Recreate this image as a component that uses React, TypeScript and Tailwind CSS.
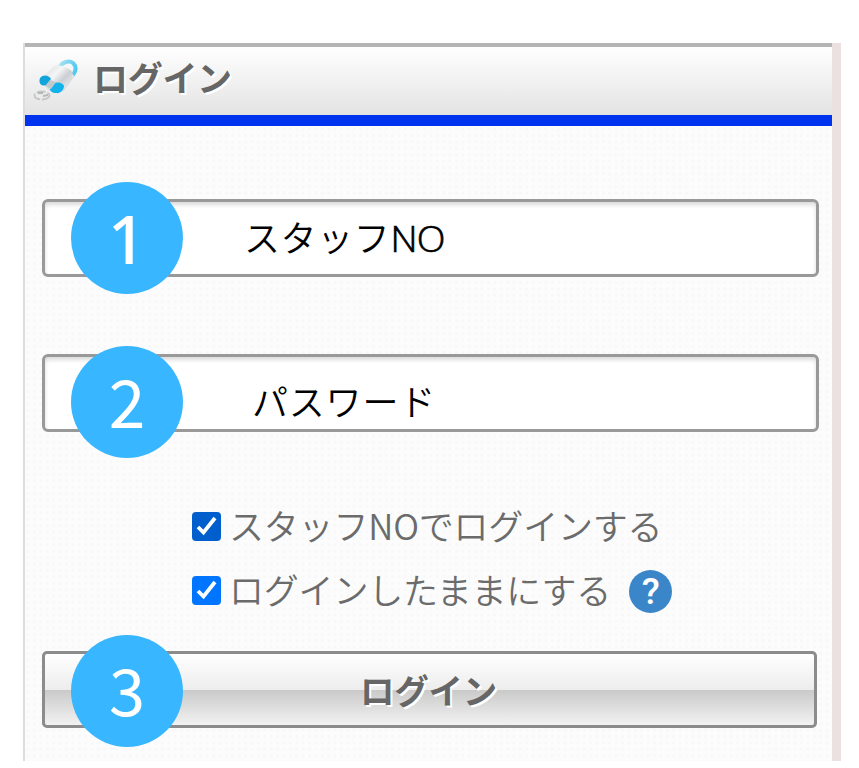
import type { ReactNode } from "react";

const inputBox =
  "flex h-[78px] w-[777px] items-center rounded-[6px] border-[3px] border-[#999] bg-white shadow-[inset_0_3px_4px_rgba(0,0,0,0.14)]";

const Badge = ({ children, className = "" }: { children: ReactNode; className?: string }) => (
  <span
    className={`absolute left-[29px] flex h-28 w-28 items-center justify-center rounded-full bg-[#38b6ff] leading-none text-white ${className}`}
  >
    {children}
  </span>
);

const LockIcon = () => (
  <svg width="46" height="46" viewBox="0 0 46 46" fill="none">
    <defs>
      <linearGradient id="lock" x1="14" y1="12" x2="34" y2="32" gradientUnits="userSpaceOnUse">
        <stop stopColor="#e0e3e6" />
        <stop offset="0.35" stopColor="#f4f5f6" />
        <stop offset="0.65" stopColor="#cbced3" />
        <stop offset="1" stopColor="#e6e8ea" />
      </linearGradient>
      <linearGradient id="shackle" x1="28" y1="6" x2="44" y2="12" gradientUnits="userSpaceOnUse">
        <stop stopColor="#a5e0f2" />
        <stop offset="1" stopColor="#4fc9f2" />
      </linearGradient>
    </defs>
    <ellipse cx="10" cy="37.5" rx="7.5" ry="4" stroke="#c3c5c6" strokeWidth="1.8" strokeDasharray="9 2" />
    <path d="M6 35h5M11 38l5-1" stroke="#b5b8b9" strokeWidth="1.8" />
    <path d="M28 9c2-5 9-7 13-4 4 4 3 8 0 12" stroke="url(#shackle)" strokeWidth="4" />
    <path d="M20 10c4-4 10-3 15 0 5 2 7 5 5 10L29 34c-7 2-18-4-22-11z" fill="url(#lock)" />
    <path d="M8 20c3-4 9-3 11 1l-4 6c-5 2-9-1-7-7z" fill="#12a5dc" />
    <path d="M22 26c3-3 9-1 10 2 0 4-4 8-8 7-4 0-6-2-6-4z" fill="#12b3ec" />
    <path d="m18 22 6 2-5 7-6-3z" fill="#bfcace" />
    <path d="m31 33 11-15" stroke="#d0d3d5" />
  </svg>
);

const Check = ({ className }: { className: string }) => (
  <span className={`flex h-[29px] w-[29px] shrink-0 items-center justify-center rounded-[4px] ${className}`}>
    <svg width="29" height="29" viewBox="0 0 29 29" fill="none">
      <path d="m6 15 5.5 5.5L23 6" stroke="white" strokeWidth="3.8" />
    </svg>
  </span>
);

const App = () => {
  return (
    <div className="h-[768px] w-[859px] overflow-hidden bg-white pt-[43px] pl-[23px] font-['Noto_Sans_CJK_JP',sans-serif]">
      <div className="h-[718px] w-[818px] border-r-[9px] border-l-2 border-r-[#ece1e1] border-l-[#dedcdd] bg-[#fcfcfc] bg-[radial-gradient(circle,#f8f8f8_1.3px,transparent_2px)] bg-[length:6.4px_6.4px]">
        <header className="flex h-[83px] items-center border-t-4 border-b-[11px] border-t-[#b5b5b5] border-b-[#0033ee] bg-linear-to-b from-white to-[#e3e3e3] pl-[7px]">
          <LockIcon />
          <h1 className="ml-[15px] pb-[10px] text-[35px] leading-none font-bold tracking-[-0.3px] text-[#666] [text-shadow:2px_2px_0_white]">
            ログイン
          </h1>
        </header>

        <main className="pl-[17px]">
          <div className="relative mt-[73px]">
            <div className={`${inputBox} pl-[199px]`}>
              <span className="pb-px text-[36px] leading-none font-[350] tracking-[0.6px] whitespace-nowrap text-black">
                スタッフ
                <span className="font-['Open_Sans',sans-serif] text-[37.5px] font-light tracking-[-0.6px] [-webkit-text-stroke:0.7px_black]">
                  NO
                </span>
              </span>
            </div>
            <Badge className="-top-[17px] font-['Noto_Sans',sans-serif] text-[67px] font-medium">1</Badge>
          </div>

          <div className="relative mt-[77px]">
            <div className={`${inputBox} pl-[207px]`}>
              <span className="pt-[13px] text-[36px] leading-none font-[350] tracking-[0.8px] whitespace-nowrap text-black">
                パスワード
              </span>
            </div>
            <Badge className="-top-2 pb-[7px] text-[66px]">2</Badge>
          </div>

          <div className="mt-[62px] ml-[150px] text-[35px] leading-none font-[350] tracking-[-0.2px] text-[#6b6b6b]">
            <label className="flex h-[64px] items-center gap-[8px] whitespace-nowrap">
              <Check className="bg-[#005fcc]" />
              <span className="pb-[3px]">スタッフNOでログインする</span>
            </label>
            <label className="flex h-[64px] items-center gap-[8px] whitespace-nowrap">
              <Check className="bg-[#0075ff]" />
              <span className="pb-[3px]">ログインしたままにする</span>
              <span className="mt-[3px] ml-[10px] flex h-[43px] w-[43px] items-center justify-center rounded-full bg-[#3b86c8] font-[Roboto,sans-serif] text-[37px] font-medium text-white">
                ?
              </span>
            </label>
          </div>

          <div className="relative mt-[29px]">
            <button className="flex h-[77px] w-[775px] items-center justify-center rounded-[5px] border-[3px] border-[#8c8c8c] bg-[linear-gradient(to_bottom,#fff_0%,#ededed_50%,#cacaca_51%,#f2f2f2_100%)] pr-[2px] text-[34.5px] leading-none font-bold tracking-[-0.2px] text-[#666] [text-shadow:2px_2px_0_white]">
              ログイン
            </button>
            <Badge className="-top-[16px] pb-[5px] text-[65px]">3</Badge>
          </div>
        </main>
      </div>
    </div>
  );
};

export default App;
